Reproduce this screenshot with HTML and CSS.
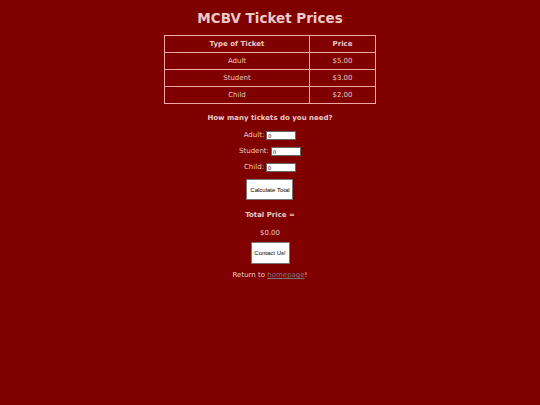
FILE: index.html
```html
<!DOCTYPE html>
<html>
<head>
<meta charset="utf-8">
<title>MCBV Ticket Prices</title>
<link rel="stylesheet" href="styles.css">
</head>
<body>
<main class="page">
  <h1 class="title">MCBV Ticket Prices</h1>
  <table class="prices">
    <thead>
      <tr><th class="col-type">Type of Ticket</th><th class="col-price">Price</th></tr>
    </thead>
    <tbody>
      <tr><td>Adult</td><td>$5.00</td></tr>
      <tr><td>Student</td><td>$3.00</td></tr>
      <tr><td>Child</td><td>$2.00</td></tr>
    </tbody>
  </table>
  <p class="question">How many tickets do you need?</p>
  <form class="order">
    <label class="field">Adult: <input class="qty" type="text" value="0"></label>
    <label class="field">Student: <input class="qty" type="text" value="0"></label>
    <label class="field">Child: <input class="qty" type="text" value="0"></label>
    <button class="btn calc" type="button">Calculate Total</button>
  </form>
  <p class="total-label">Total Price =</p>
  <p class="total">$0.00</p>
  <button class="btn contact" type="button">Contact Us!</button>
  <p class="return">Return to <a href="#" class="home">homepage</a>!</p>
</main>
</body>
</html>
```
FILE: styles.css
```css
html, body {
  margin: 0;
  padding: 0;
  background: #800000;
}
body {
  font-family: "DejaVu Sans", Verdana, sans-serif;
  color: #ebcaca;
  font-size: 7px;
}
.page {
  display: flex;
  flex-direction: column;
  align-items: center;
  padding-top: 8px;
}
.title {
  margin: 0;
  font-size: 13.5px;
  font-weight: bold;
  line-height: 20px;
}
.prices {
  margin-top: 7px;
  width: 212px;
  border-collapse: collapse;
  border: 1px solid #f0a8a8;
}
.prices th, .prices td {
  border: 1px solid #f0a8a8;
  height: 16px;
  padding: 0;
  text-align: center;
  font-size: 7px;
}
.prices th { font-weight: bold; }
.col-type { width: 144px; }
.question {
  margin: 10px 0 0;
  font-weight: bold;
  line-height: 9px;
}
.order {
  display: flex;
  flex-direction: column;
  align-items: center;
  gap: 7px;
  margin-top: 8px;
}
.field {
  display: flex;
  align-items: center;
  gap: 2px;
  line-height: 9px;
}
.qty {
  width: 26px;
  height: 7px;
  padding: 0 1px;
  border: 1px solid #666;
  background: #fff;
  font-family: "DejaVu Sans", sans-serif;
  font-size: 5px;
  color: #000;
}
.btn {
  background: #fff;
  border: 1px solid #777;
  font-family: "Liberation Sans", Arial, sans-serif;
  font-size: 6px;
  color: #000;
  padding: 0 2px;
  height: 21px;
}
.calc { width: 47px; margin-top: 0; }
.total-label {
  margin: 11px 0 0;
  font-weight: bold;
  line-height: 9px;
}
.total {
  margin: 9px 0 0;
  line-height: 9px;
}
.contact { width: 39px; height: 22px; margin-top: 4px; }
.return {
  margin: 7px 0 0;
  line-height: 9px;
}
.home { color: #777; }
```
